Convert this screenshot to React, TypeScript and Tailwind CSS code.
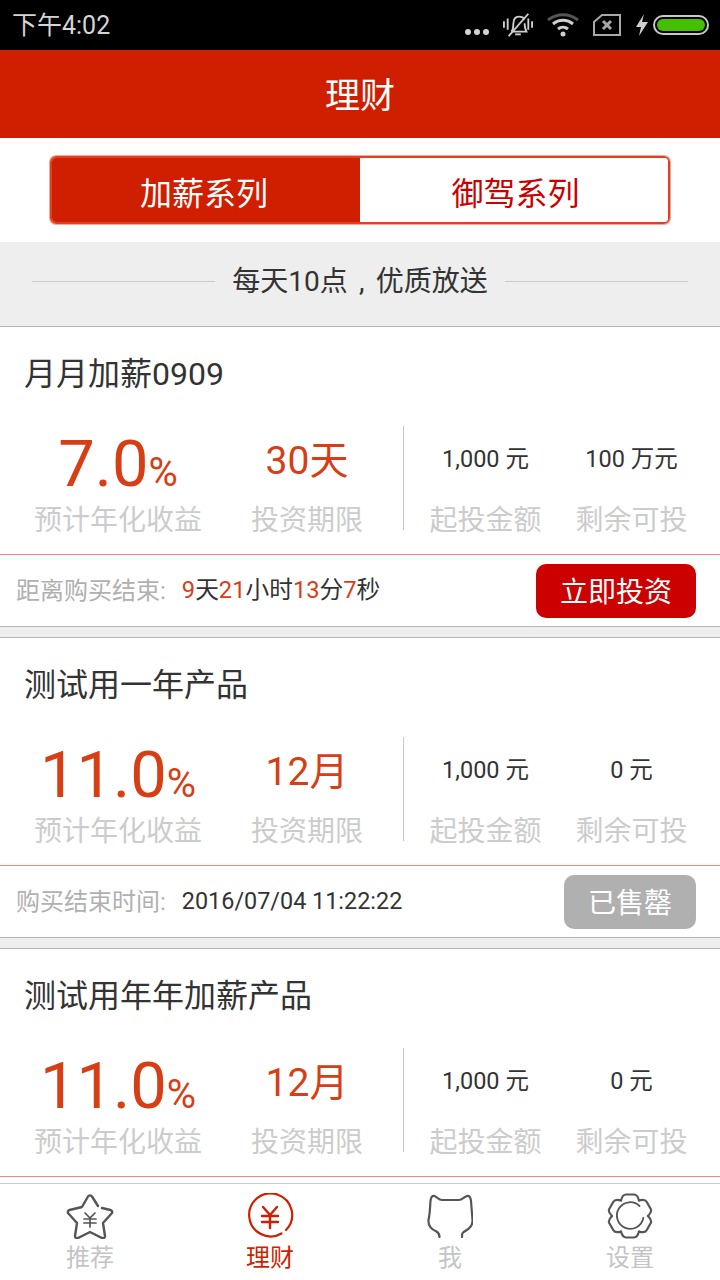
const FONT = "font-['Roboto','Noto_Sans_CJK_SC',sans-serif]";

function Cellular() {
  return (
    <div className="flex h-[50px] items-center bg-black pl-3 pr-[11px] text-[#d4d4d4]">
      <span className="text-[25px] leading-none">下午4:02</span>
      <div className="ml-auto flex items-center">
        <div className="mt-[14px] flex gap-[3px]">
          <i className="h-[6px] w-[6px] rounded-full bg-[#d4d4d4]" />
          <i className="h-[6px] w-[6px] rounded-full bg-[#d4d4d4]" />
          <i className="h-[6px] w-[6px] rounded-full bg-[#d4d4d4]" />
        </div>
        <svg className="ml-[14px]" width="30" height="26" viewBox="0 0 32 26" fill="none" stroke="#cfcfcf" strokeWidth="2">
          <path d="M1 9v7M5 6v12M27 6v12M31 9v7" strokeWidth="2" />
          <path d="M9 20c2-2 2-4 2-8 0-5 2-8 6-8 3 0 5 1 6 3M23 11c0 4 1 7 2 9H9" />
          <path d="M13 23h6" />
          <path d="M6 25 27 1" />
        </svg>
        <svg className="ml-[14px]" width="32" height="24" viewBox="0 0 32 24" fill="none" stroke="#cfcfcf">
          <path d="M1 7c9-7 21-7 30 0" strokeWidth="3" stroke="#555" />
          <path d="M6 11c6-5 14-5 20 0" strokeWidth="3" />
          <path d="M11 16c3-2.500 7-2.500 10 0" strokeWidth="3" />
          <circle cx="16" cy="21" r="2.500" fill="#cfcfcf" stroke="none" />
        </svg>
        <svg className="ml-[13px]" width="30" height="24" viewBox="0 0 30 24" fill="none" stroke="#a8a8a8" strokeWidth="2">
          <path d="M10 2h18v20H2V9z" />
          <path d="M11 8l8 8M19 8l-8 8" strokeWidth="3" />
        </svg>
        <svg className="ml-[13px]" width="14" height="24" viewBox="0 0 14 24" fill="#cfcfcf">
          <path d="M9 1 1 14h5l-2 9 9-14H7z" />
        </svg>
        <div className="ml-[4px] flex h-[20px] w-[56px] items-center rounded-[10px] border-2 border-[#c8c8c8] p-[2px]">
          <div className="h-full w-full rounded-[6px] bg-[#45c000]" />
        </div>
      </div>
    </div>
  );
}

function Star() {
  return (
    <svg width="48" height="46" viewBox="0 0 48 46" fill="none" stroke="#555" strokeWidth="2.400" strokeLinejoin="round" strokeLinecap="round">
      <path d="M32 13 26 3.500c-1-1.500-3-1.500-4 0L16 14 3.500 17c-1.500.5-2 2-1.500 3l9 10-2 13c0 2 1.500 2.500 3 2l12-6 12 6c1.500.5 3 0 3-2l-2-13 9-10c.5-1 0-2.500-1.500-3L36 15" />
      <path d="M19 20l5 5 5-5M18 26h12M18 30h12M24 25v9" strokeWidth="1.700" />
    </svg>
  );
}

function Yen() {
  return (
    <svg width="48" height="46" viewBox="0 0 48 46" fill="none" stroke="#d01e00" strokeWidth="2.200" strokeLinecap="round">
      <path d="M35.500 40.500A21.500 21.500 0 1 1 40 37" />
      <path d="M17 14l7 8 7-8M16 23h16M16 29h16M24 22v13" strokeWidth="2.400" />
    </svg>
  );
}

function Cat() {
  return (
    <svg width="46" height="44" viewBox="0 0 46 44" fill="none" stroke="#555" strokeWidth="2.200" strokeLinecap="round">
      <path d="M12.500 43c0-3-.5-4-3-5.500C4 35 1 31 1.500 26 3 20 3 13 3.500 7 4 3 5 1.500 7.500 2c2.500 1 4.500 4 7.500 4h17c3 0 5-3 8-4 2.500-.5 3.500 1 4 5 .5 6 1 13 1.500 19 .5 5-3.500 9-8 11.500-2.500 1.500-2.500 2.500-2.500 5.500" />
    </svg>
  );
}

function Gear() {
  const rotations = ["rotate(0 23 23)", "rotate(60 23 23)", "rotate(120 23 23)", "rotate(180 23 23)", "rotate(240 23 23)", "rotate(300 23 23)"];
  return (
    <svg width="46" height="46" viewBox="0 0 46 46" fill="none" stroke="#555" strokeWidth="2.200" strokeLinecap="round">
      {rotations.map((r) => (
        <path key={r} transform={r} d="M14 7.400C15 3.500 16.500 1.500 19 1.500h8c2.500 0 4 2 5 5.900" />
      ))}
      <path d="M32.500 13A13.300 13.300 0 1 0 36.300 25" strokeWidth="1.800" />
    </svg>
  );
}

type P = {
  title: string;
  rate: string;
  term: string;
  remain: string;
  footer: React.ReactNode;
  action?: React.ReactNode;
};

const R = ({ children }: { children: React.ReactNode }) => <span className="text-[#dc3c14]">{children}</span>;

function Card({ title, rate, term, remain, footer, action }: P) {
  return (
    <div className="bg-white">
      <div className="flex h-[99px] items-center pb-[5px] pl-[24px] text-[32px] leading-none text-[#333]">{title}</div>
      <div className="flex h-[128px]">
        <div className="flex h-[104px] w-[404px] border-r border-[#c8c8c8]">
          <div className="flex w-[236px] flex-col items-center">
            <div className="h-[72px] shrink-0 text-[#d63f16]">
              <span className="text-[65px] leading-[76px]">{rate}</span>
              <span className="text-[40px] leading-none">%</span>
            </div>
            <div className="mt-[9px] shrink-0 text-[28px] leading-none text-[#cccccc]">预计年化收益</div>
          </div>
          <div className="flex w-[142px] flex-col items-center">
            <div className="flex h-[70px] shrink-0 items-center text-[39px] leading-none text-[#d63f16]">{term}</div>
            <div className="mt-[11px] shrink-0 text-[28px] leading-none text-[#cccccc]">投资期限</div>
          </div>
        </div>
        <div className="flex h-[104px] flex-1">
          <div className="flex w-[163px] flex-col items-center">
            <div className="flex h-[68px] shrink-0 items-center text-[23.5px] leading-none text-[#333]">1,000 元</div>
            <div className="mt-[13px] shrink-0 text-[28px] leading-none text-[#cccccc]">起投金额</div>
          </div>
          <div className="flex w-[129px] flex-col items-center">
            <div className="flex h-[68px] shrink-0 items-center text-[23.5px] leading-none text-[#333]">{remain}</div>
            <div className="mt-[13px] shrink-0 text-[28px] leading-none text-[#cccccc]">剩余可投</div>
          </div>
        </div>
      </div>
      <div className="flex h-[72px] items-center border-t border-[#ff8080] pl-4 pr-[24px]">
        <div className="flex items-center text-[23.4px] leading-none text-[#333]">{footer}</div>
        {action}
      </div>
    </div>
  );
}

export default function App() {
  return (
    <div className={`${FONT} flex h-[1280px] w-[720px] flex-col overflow-hidden bg-white`}>
      <Cellular />
      <div className="flex h-[88px] items-center justify-center bg-[#d01e00] pt-[5px] text-[35px] leading-none text-white">理财</div>
      <div className="flex h-[104px] items-center justify-center bg-white">
        <div className="flex h-[68px] w-[620px] overflow-hidden rounded-[6px] border-2 border-[#e0401f] text-[32px] leading-none shadow-[0_0_0_1px_rgba(224,64,31,0.45)]">
          <div className="flex w-[308px] items-center justify-center bg-[#d01e00] pr-[4px] pt-[7px] text-white">加薪系列</div>
          <div className="flex flex-1 items-center justify-center bg-white pl-[3px] pt-[7px] text-[#cc0000]">御驾系列</div>
        </div>
      </div>
      <div className="flex h-[85px] items-center border-b border-[#b4b4b4] bg-[#eeeeee] px-[32px] pb-[5px]">
        <div className="h-px flex-1 bg-[#cccccc]" />
        <span className="px-[17px] text-[28px] leading-none text-[#333]">
          每天10点<span className="inline-block w-[28px] text-center">,</span>优质放送
        </span>
        <div className="h-px flex-1 bg-[#cccccc]" />
      </div>
      <div className="flex-1 overflow-hidden">
        <Card
          title="月月加薪0909"
          rate="7.0"
          term="30天"
          remain="100 万元"
          footer={
            <>
              <span className="mr-[16px] text-[24px] text-[#b0b0b0]">距离购买结束:</span>
              <span className="text-[23.7px]">
                <R>9</R>天<R>21</R>小时<R>13</R>分<R>7</R>秒
              </span>
            </>
          }
          action={
            <div className="ml-auto flex h-[54px] w-[160px] items-center justify-center rounded-[10px] bg-[#cc0000] pt-[5px] text-[28px] leading-none text-white">立即投资</div>
          }
        />
        <div className="h-[12px] border-y border-[#b4b4b4] bg-[#eeeeee]" />
        <Card
          title="测试用一年产品"
          rate="11.0"
          term="12月"
          remain="0 元"
          footer={
            <>
              <span className="mr-[16px] text-[24px] text-[#b0b0b0]">购买结束时间:</span>
              2016/07/04 11:22:22
            </>
          }
          action={
            <div className="ml-auto flex h-[54px] w-[132px] items-center justify-center rounded-[10px] bg-[#b0b0b0] pt-[5px] text-[28px] leading-none text-white">已售罄</div>
          }
        />
        <div className="h-[12px] border-y border-[#b4b4b4] bg-[#eeeeee]" />
        <Card title="测试用年年加薪产品" rate="11.0" term="12月" remain="0 元" footer={null} />
      </div>
      <div className="flex h-[97px] border-t border-[#cccccc] bg-white text-[24px] leading-none text-[#c4c4c4]">
        {[
          { label: "推荐", icon: <Star /> },
          { label: "理财", icon: <Yen />, active: true },
          { label: "我", icon: <Cat /> },
          { label: "设置", icon: <Gear /> },
        ].map((t) => (
          <div key={t.label} className={`flex flex-1 flex-col items-center pt-[9px] ${t.active ? "text-[#d01e00]" : ""}`}>
            <div className="flex h-[46px] items-center">{t.icon}</div>
            <div className="mt-[7px]">{t.label}</div>
          </div>
        ))}
      </div>
    </div>
  );
}
